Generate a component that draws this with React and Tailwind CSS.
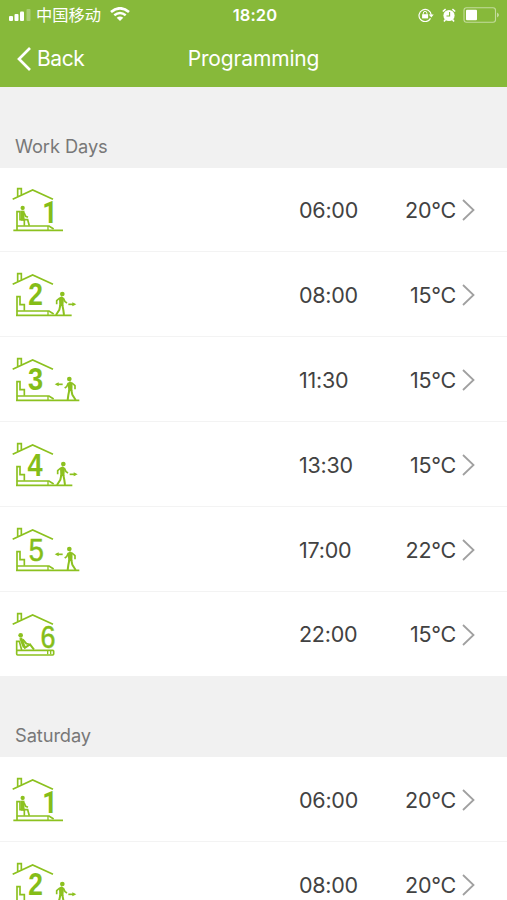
const sections = [
  {
    title: "Work Days",
    periods: [
      { id: 1, time: "06:00", temp: "20°C" },
      { id: 2, time: "08:00", temp: "15°C" },
      { id: 3, time: "11:30", temp: "15°C" },
      { id: 4, time: "13:30", temp: "15°C" },
      { id: 5, time: "17:00", temp: "22°C" },
      { id: 6, time: "22:00", temp: "15°C" },
    ],
  },
  {
    title: "Saturday",
    periods: [
      { id: 1, time: "06:00", temp: "20°C" },
      { id: 2, time: "08:00", temp: "20°C" },
    ],
  },
];

// Position and weight of the number inside the house
const digits = {
  1: { x: 149, y: 143, size: 92, weight: 700 },
  2: { x: 107, y: 134, size: 92, weight: 700 },
  3: { x: 107, y: 135, size: 95, weight: 700 },
  4: { x: 105, y: 138, size: 95, weight: 700 },
  5: { x: 109, y: 138, size: 95, weight: 400 },
  6: { x: 144, y: 143, size: 94, weight: 400 },
};

const Walker = () => (
  <g strokeLinejoin="round">
    <circle cx="7" cy="102" r="7" fill="#8cc11f" stroke="none" />
    <path d="M-3 113 L5 109 L12 114 L10 138 L-2 138 Z" fill="#8cc11f" stroke="none" />
    <path d="M-1 114 L-10 122 L-10 133 M10 114 L15 125 L21 129" strokeWidth="5" />
    <path d="M1 135 L-2 149 L-12 165 M7 135 L10 150 L12 165" strokeWidth="6" />
  </g>
);

const PeriodIcon = ({ id }) => {
  const digit = digits[id];
  const leaving = id === 2 || id === 4;
  const arriving = id === 3 || id === 5;
  const floorEnd = { 1: 189, 2: 215, 3: 238, 4: 217, 5: 238, 6: 162 }[id];

  return (
    <svg
      viewBox="0 0 300 210"
      className="h-[70px] w-[100px] shrink-0"
      fill="none"
      stroke="#8cc11f"
      strokeWidth="5"
    >
      <path d="M38 73 L98 45 L159 73 M53 65 V41 H64 V60" />
      <text
        x={digit.x}
        y={digit.y}
        fontSize={digit.size}
        fontWeight={digit.weight}
        fontFamily={id === 1 ? "Roboto, sans-serif" : "Liberation Sans, Arial, sans-serif"}
        textAnchor="middle"
        fill="#84bd18"
        stroke={id > 4 ? "#84bd18" : "none"}
        strokeWidth="1.5"
        transform={`translate(${digit.x} 0) scale(0.86 1) translate(${-digit.x} 0)`}
      >
        {id}
      </text>

      {/* chair, or the low lounger at night */}
      {id === 6 ? (
        <>
          <path d="M50 152 V124 H58 L65 150" strokeWidth="5" />
          <circle cx="62" cy="106" r="7" fill="#8cc11f" stroke="none" />
          <path d="M62 114 L73 142" strokeWidth="9" />
          <path d="M68 118 L79 131 L86 132 M72 145 L90 133 L102 149" strokeWidth="6" />
          <rect x="50" y="151" width="111" height="14" rx="3" />
          <path d="M143 153 V163 M152 153 V163" strokeWidth="4" />
        </>
      ) : (
        <>
          <path d="M51 165 V110 H60 V134 H73 V152" strokeWidth="5" />
          <path d="M50 153 H147 L161 162" strokeWidth="5" />
          <path d="M144 153 V165" strokeWidth="4" />
          <path
            d={`M${id === 1 ? 40 : 48} 166 H${floorEnd}`}
            strokeWidth="5"
          />
        </>
      )}

      {id === 1 && (
        <>
          <circle cx="68" cy="99" r="6.5" fill="#8cc11f" stroke="none" />
          <path d="M68 107 V137" strokeWidth="11" />
          <path d="M69 134 H83 L88 152 M72 113 L77 124 L84 127" strokeWidth="5" />
        </>
      )}
      {leaving && (
        <>
          <g transform={`translate(${id === 2 ? 180 : 183} 0)`}>
            <Walker />
          </g>
          <g transform={`translate(${id === 2 ? 205 : 209} 133)`}>
            <path d="M0 0 H18" strokeWidth="5" />
            <path d="M12 -6 L24 0 L12 6 Z" fill="#8cc11f" stroke="none" />
          </g>
        </>
      )}
      {arriving && (
        <>
          <g transform="translate(215 0) scale(-1 1)">
            <Walker />
          </g>
          <path d="M170 118 H188" strokeWidth="5" />
          <path d="M176 112 L164 118 L176 124 Z" fill="#8cc11f" stroke="none" />
        </>
      )}
    </svg>
  );
};

const StatusBar = () => (
  <div className="flex h-[30px] items-center">
    <div className="flex w-[210px] items-center pl-[9px]">
      <svg viewBox="0 0 23 12" className="h-3 w-[23px]" fill="white">
        <rect x="0" y="7" width="4" height="5" rx="1" />
        <rect x="5.5" y="5" width="4" height="7" rx="1" />
        <rect x="11" y="2.5" width="4" height="9.5" rx="1" />
        <rect x="17.5" y="0" width="4" height="12" rx="1" opacity="0.3" />
      </svg>
      <span className="-mt-0.5 ml-[4px] font-['Noto_Sans_CJK_SC',sans-serif] text-[16.3px] leading-[30px]">
        中国移动
      </span>
      <svg viewBox="0 0 20 14" className="-mt-0.5 ml-[9px] h-3.5 w-5" fill="none" stroke="white">
        <path d="M1 5 Q10 -2.4 19 5" strokeWidth="2.7" />
        <path d="M4.3 8.3 Q10 3.7 15.7 8.3" strokeWidth="2.5" />
        <path d="M10 14 L6.7 10.8 Q10 8.3 13.3 10.8 Z" fill="white" stroke="none" />
      </svg>
    </div>
    <div className="w-[90px] text-center text-[16.5px] font-semibold tracking-[0.1px]">
      18:20
    </div>
    <div className="flex flex-1 items-center justify-end pr-[7px]">
      <svg viewBox="0 0 16 14" className="h-3.5 w-4" fill="none" stroke="white">
        <path d="M12.5 10.4 A6.1 6.1 0 1 1 13.2 7" strokeWidth="1.2" />
        <path d="M10.8 6.5 H15.7 L13.3 9.5 Z" fill="white" stroke="none" />
        <rect x="4.1" y="6.2" width="6" height="4.2" fill="white" stroke="none" />
        <path d="M5.3 6.5 V5.2 A1.8 1.8 0 0 1 8.9 5.2 V6.5" strokeWidth="1" />
      </svg>
      <svg viewBox="0 0 14 14" className="ml-[8px] h-3.5 w-3.5" fill="none">
        <circle cx="7" cy="7.5" r="5.6" fill="white" />
        <path d="M0.8 3.5 L3.6 1.1 M10.4 1.1 L13.2 3.5 M3.5 11.5 L2 13.5 M10.5 11.5 L12 13.5" stroke="white" strokeWidth="1.6" />
        <path d="M7.6 4 V8 H4.5" stroke="#87b93a" strokeWidth="1.1" />
      </svg>
      <svg viewBox="0 0 37 16" className="ml-[7px] h-4 w-[37px]">
        <rect x="1" y="0.8" width="31.5" height="14.4" rx="2.5" fill="none" stroke="white" strokeOpacity="0.5" strokeWidth="1.1" />
        <rect x="3" y="2.7" width="11" height="10.6" rx="1" fill="white" />
        <path d="M34 5.5 Q38 8 34 10.5 Z" fill="white" fillOpacity="0.5" />
      </svg>
    </div>
  </div>
);

const Header = () => (
  <header className="h-[87px] bg-[#87b93a] text-white">
    <StatusBar />
    <div className="grid h-[57px] grid-cols-[1fr_auto_1fr] items-center">
      <div className="flex items-center pl-[17px]">
        <svg viewBox="0 0 14 24" className="h-6 w-3.5" fill="none" stroke="white" strokeWidth="2.7">
          <path d="M13 1 L2 12 L13 23" />
        </svg>
        <span className="ml-[6px] text-[21px] tracking-[-0.4px]">Back</span>
      </div>
      <h1 className="text-[21px] tracking-[-0.15px]">Programming</h1>
    </div>
  </header>
);

const PeriodRow = ({ period }) => (
  <div className="flex h-[84.83px] items-center border-b border-[#f3f3f3] bg-white pt-[2px] pr-[32px] text-[21.5px] tracking-[-0.25px] text-[#424242] last:border-white">
    <PeriodIcon id={period.id} />
    <span className="ml-[199px] w-[80px]">{period.time}</span>
    <span className="flex-1 text-right">{period.temp}</span>
    <svg viewBox="0 0 13 22" className="ml-[6px] h-[22px] w-[13px]" fill="none" stroke="#a0a0a0" strokeWidth="1.8">
      <path d="M1 1 L11.5 11 L1 21" />
    </svg>
  </div>
);

const App = () => (
  <div className="flex h-[900px] w-[507px] flex-col overflow-hidden bg-[#f1f1f1] font-['Inter',sans-serif]">
    <Header />
    {sections.map((section) => (
      <section key={section.title} className="shrink-0">
        <h2 className="flex h-[80.5px] items-end pb-[8px] pl-[15px] text-[18.3px] leading-[28px] tracking-[-0.1px] text-[#787878]">
          {section.title}
        </h2>
        {section.periods.map((period) => (
          <PeriodRow key={period.id} period={period} />
        ))}
      </section>
    ))}
  </div>
);

export default App;
